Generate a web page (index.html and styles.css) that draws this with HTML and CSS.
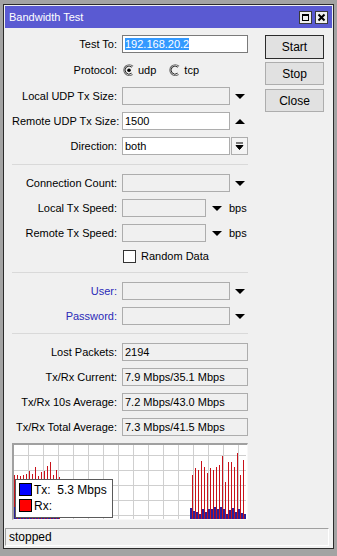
FILE: index.html
```html
<!DOCTYPE html>
<html lang="en">
<head>
<meta charset="UTF-8">
<title>Bandwidth Test</title>
<link rel="stylesheet" href="styles.css">
</head>
<body>
<div class="window">
    <div class="titlebar">
        <span class="title">Bandwidth Test</span>
        <span class="tbtn">
            <svg width="11" height="11" viewBox="0 0 11 11"><rect x="2.5" y="2.5" width="6" height="6" fill="none" stroke="#000"/><rect x="2" y="2" width="7" height="2" fill="#000"/></svg>
        </span>
        <span class="tbtn">
            <svg width="11" height="11" viewBox="0 0 11 11"><path d="M2.5 2.5L8.5 8.5M8.5 2.5L2.5 8.5" stroke="#000" stroke-width="2"/></svg>
        </span>
    </div>

    <div class="content">
        <div class="form">
            <div class="group">
                <div class="row">
                    <label>Test To:</label>
                    <div class="ctl"><div class="field wide white edit"><span class="sel">192.168.20.2</span></div></div>
                </div>
                <div class="row protocol">
                    <label>Protocol:</label>
                    <div class="ctl">
                        <svg class="radio" width="12" height="12" viewBox="0 0 12 12">
                            <path d="M10 2.2A5.4 5.4 0 1 0 9.6 10.4" fill="none" stroke="#6d6d6d" stroke-width="1.2"/>
                            <path d="M8.8 3.2A4 4 0 1 0 8.6 9.2" fill="none" stroke="#222" stroke-width="1"/>
                            <circle cx="6" cy="6.2" r="1.8" fill="#000"/>
                        </svg>
                        <span class="opt">udp</span>
                        <svg class="radio" width="12" height="12" viewBox="0 0 12 12">
                            <path d="M10 2.2A5.4 5.4 0 1 0 9.6 10.4" fill="none" stroke="#6d6d6d" stroke-width="1.2"/>
                            <path d="M8.8 3.2A4 4 0 1 0 8.6 9.2" fill="none" stroke="#222" stroke-width="1"/>
                        </svg>
                        <span class="opt">tcp</span>
                    </div>
                </div>
                <div class="row">
                    <label>Local UDP Tx Size:</label>
                    <div class="ctl"><div class="field"></div><span class="down"></span></div>
                </div>
                <div class="row">
                    <label>Remote UDP Tx Size:</label>
                    <div class="ctl"><div class="field white">1500</div><span class="up"></span></div>
                </div>
                <div class="row">
                    <label>Direction:</label>
                    <div class="ctl">
                        <div class="field white">both</div>
                        <span class="dropbtn">
                            <svg width="9" height="9" viewBox="0 0 9 9"><path d="M1 1h7M1 3.5h7L4.5 7.5z" stroke="#000" fill="#000" stroke-width="1"/></svg>
                        </span>
                    </div>
                </div>
            </div>

            <div class="sep"></div>

            <div class="group">
                <div class="row">
                    <label>Connection Count:</label>
                    <div class="ctl"><div class="field"></div><span class="down"></span></div>
                </div>
                <div class="row">
                    <label>Local Tx Speed:</label>
                    <div class="ctl"><div class="field short"></div><span class="down"></span><span class="unit">bps</span></div>
                </div>
                <div class="row">
                    <label>Remote Tx Speed:</label>
                    <div class="ctl"><div class="field short"></div><span class="down"></span><span class="unit">bps</span></div>
                </div>
                <div class="row check">
                    <span></span>
                    <div class="ctl"><span class="box"></span><span>Random Data</span></div>
                </div>
            </div>

            <div class="sep"></div>

            <div class="group">
                <div class="row">
                    <label class="link">User:</label>
                    <div class="ctl"><div class="field"></div><span class="down"></span></div>
                </div>
                <div class="row">
                    <label class="link">Password:</label>
                    <div class="ctl"><div class="field"></div><span class="down"></span></div>
                </div>
            </div>

            <div class="sep last"></div>

            <div class="group">
                <div class="row">
                    <label>Lost Packets:</label>
                    <div class="ctl"><div class="field wide">2194</div></div>
                </div>
                <div class="row">
                    <label>Tx/Rx Current:</label>
                    <div class="ctl"><div class="field wide">7.9 Mbps/35.1 Mbps</div></div>
                </div>
                <div class="row">
                    <label>Tx/Rx 10s Average:</label>
                    <div class="ctl"><div class="field wide">7.2 Mbps/43.0 Mbps</div></div>
                </div>
                <div class="row">
                    <label>Tx/Rx Total Average:</label>
                    <div class="ctl"><div class="field wide">7.3 Mbps/41.5 Mbps</div></div>
                </div>
            </div>

            <div class="graph">
                <svg width="232" height="74" viewBox="0 0 232 74">
                    <path class="grid" d="M14.5 0V74M29.5 0V74M44.5 0V74M59.5 0V74M74.5 0V74M89.5 0V74M104.5 0V74M119.5 0V74M134.5 0V74M149.5 0V74M164.5 0V74M179.5 0V74M194.5 0V74M209.5 0V74M224.5 0V74M0 10.5H232M0 25.5H232M0 40.5H232M0 55.5H232M0 70.5H232"/>
                    <path class="rx" d="M0.5 30V74M3.5 30V74M6.5 31V74M9.5 30V74M12.5 29V74M15.5 26V74M18.5 29V74M21.5 22V74M24.5 31V74M27.5 27V74M30.5 26V74M33.5 21V74M36.5 17V74M39.5 30V74M42.5 25V74M45.5 32V74"/>
                    <path class="tx" d="M0 62V74M2 66V74M5 67V74M8 66V74M11 67V74M14 66V74M17 67V74M20 66V74M23 67V74M26 66V74M29 67V74M32 66V74M35 67V74M38 66V74M41 67V74M44 66V74"/>
                    <path class="rx" d="M178.5 30V74M181.5 23V74M184.5 25V74M187.5 16V74M190.5 22V74M193.5 28V74M196.5 23V74M199.5 25V74M202.5 22V74M205.5 20V74M208.5 11V74M211.5 37V74M214.5 17V74M217.5 17V74M220.5 22V74M223.5 8V74M226.5 30V74M229.5 15V74"/>
                    <path class="tx" d="M177 63V74M180 66V74M183 67V74M186 69V74M189 64V74M192 67V74M195 64V74M198 64V74M201 62V74M204 64V74M207 62V74M210 64V74M213 69V74M216 65V74M219 63V74M222 67V74M225 64V74M228 68V74M231 69V74"/>
                </svg>
                <div class="legend">
                    <div class="item"><span class="swatch tx"></span>Tx:&nbsp;&nbsp;5.3 Mbps</div>
                    <div class="item"><span class="swatch rx"></span>Rx:</div>
                </div>
            </div>
        </div>

        <div class="actions">
            <button class="default">Start</button>
            <button>Stop</button>
            <button>Close</button>
        </div>
    </div>

    <div class="status">stopped</div>
</div>
</body>
</html>
```

FILE: styles.css
```css
body {
    margin: 0;
    background: #a3a3a3;
    font-family: "Liberation Sans", Arial, sans-serif;
    font-size: 11px;
    color: #000;
}
.window {
    box-sizing: border-box;
    width: 331px;
    height: 545px;
    margin: 4px 3px 0;
    padding: 1px;
    border: 1px solid #2b2b2b;
    background: #f0f0f0;
    display: flex;
    flex-direction: column;
}
.titlebar {
    height: 22px;
    flex: none;
    display: flex;
    align-items: center;
    gap: 3px;
    padding: 0 4px 0 4px;
    background: #5a5ad2;
    color: #fff;
    font-size: 11px;
}
.title {
    margin-right: auto;
}
.tbtn {
    box-sizing: border-box;
    width: 13px;
    height: 13px;
    border: 1px solid #3a3a3a;
    background: #f0f0f0;
    display: flex;
    align-items: center;
    justify-content: center;
}
.tbtn svg {
    display: block;
}
.content {
    flex: 1;
    display: flex;
    padding: 7px 0 0 7px;
}
.form {
    width: 236px;
}
.group {
    display: flex;
    flex-direction: column;
    gap: 7px;
}
.row {
    display: grid;
    grid-template-columns: 105px auto;
    column-gap: 5px;
    align-items: center;
    height: 18px;
}
.row label {
    text-align: right;
    white-space: nowrap;
}
.row .link {
    color: #2a2ab8;
}
.row.protocol {
    height: 20px;
}
.row.check {
    height: 14px;
}
.ctl {
    display: flex;
    align-items: center;
    white-space: nowrap;
}
.field {
    box-sizing: border-box;
    width: 108px;
    height: 18px;
    padding: 0 2px;
    line-height: 16px;
    border: 1px solid #adadad;
    background: #f0f0f0;
    overflow: hidden;
}
.field.wide {
    width: 126px;
}
.field.short {
    width: 84px;
}
.field.white {
    background: #fff;
}
.field.edit {
    border-color: #7a7a7a;
}
.sel {
    background: #3399ff;
    color: #fff;
}
.down, .up {
    width: 0;
    height: 0;
    margin-left: 5px;
    border-left: 5px solid transparent;
    border-right: 5px solid transparent;
}
.down {
    border-top: 5px solid #000;
}
.up {
    border-bottom: 5px solid #000;
}
.field.short + .down {
    margin-left: 6px;
}
.unit {
    margin-left: 7px;
}
.dropbtn {
    box-sizing: border-box;
    width: 17px;
    height: 18px;
    margin-left: 1px;
    border: 1px solid #adadad;
    background: #f4f4f4;
    display: flex;
    align-items: center;
    justify-content: center;
}
.radio {
    display: block;
    margin-left: 1px;
}
.opt {
    margin: 0 12px 0 3px;
}
.box {
    box-sizing: border-box;
    width: 13px;
    height: 13px;
    margin: 0 5px 0 1px;
    border: 1px solid #333;
    background: #fff;
}
.sep {
    height: 1px;
    margin: 9px 0;
    background: #d9d9d9;
}
.sep.last {
    margin-top: 8px;
}
.graph {
    position: relative;
    box-sizing: border-box;
    height: 77px;
    margin-top: 7px;
    border-style: solid;
    border-width: 2px 1px 1px 2px;
    border-color: #a0a0a0 #f8f8f8 #f8f8f8 #a0a0a0;
    background: #fff;
    overflow: hidden;
}
.graph svg {
    display: block;
}
.graph .grid {
    stroke: #cfcfcf;
    stroke-width: 1;
    fill: none;
}
.graph .rx {
    stroke: #c8121a;
    stroke-width: 1;
    fill: none;
}
.graph .tx {
    stroke: #2b1f9a;
    stroke-width: 2;
    fill: none;
}
.legend {
    position: absolute;
    left: 1px;
    top: 34px;
    box-sizing: border-box;
    width: 98px;
    height: 39px;
    padding: 3px 0 0 3px;
    border: 1px solid #5a5a5a;
    background: #fff;
    font-size: 12px;
}
.item {
    display: flex;
    align-items: center;
    height: 13px;
    margin-bottom: 3px;
}
.swatch {
    box-sizing: border-box;
    width: 13px;
    height: 13px;
    margin-right: 2px;
    border: 1px solid #000;
}
.swatch.tx {
    background: #0000ff;
}
.swatch.rx {
    background: #ff0000;
}
.actions {
    margin-left: 17px;
    display: flex;
    flex-direction: column;
}
button {
    box-sizing: border-box;
    width: 59px;
    height: 23px;
    margin-bottom: 3px;
    padding: 0;
    border: 1px solid #adadad;
    background: #e1e1e1;
    font-family: inherit;
    font-size: 12px;
    color: #000;
}
button.default {
    height: 24px;
    border: 1px solid #2b2b2b;
}
button + button + button {
    margin-top: 1px;
}
.status {
    box-sizing: border-box;
    height: 18px;
    margin: 0 3px 1px 0;
    padding: 0 3px;
    line-height: 16px;
    border-style: solid;
    border-width: 1px;
    border-color: #a0a0a0 #fff #fff #a0a0a0;
    font-size: 12px;
}
```
